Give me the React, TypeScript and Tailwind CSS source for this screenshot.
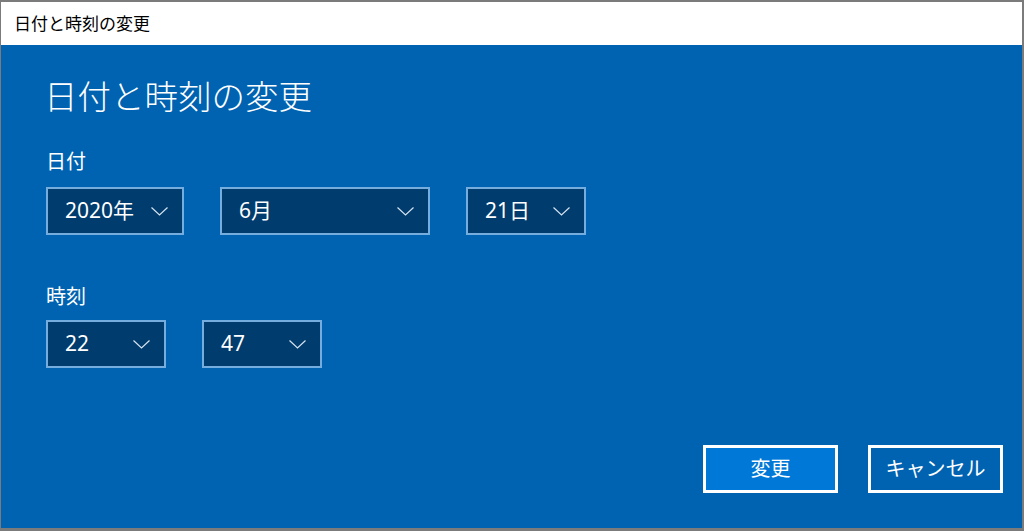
import React from "react";

const font = { fontFamily: '"Noto Sans", "Noto Sans CJK JP", sans-serif' };

function Chevron() {
  return (
    <svg width="17" height="9" viewBox="0 0 17 9" fill="none" className="shrink-0">
      <path d="M0.5 0.5 L8.5 8 L16.5 0.5" stroke="#d5e3f0" strokeWidth="1.2" />
    </svg>
  );
}

function Select({ value, width }: { value: string; width: string }) {
  return (
    <div
      className={`${width} flex h-[48px] items-center justify-between border-2 border-[#76addf] bg-[#003c6d] pl-[17px] pr-[14px] text-[21px] text-white`}
    >
      <span>{value}</span>
      <Chevron />
    </div>
  );
}

export default function App() {
  return (
    <div
      style={font}
      className="flex h-[531px] w-[1024px] flex-col bg-[#7b7b7b] pb-[3px] pl-[1px] pr-[2px] pt-[2px]"
    >
      <div className="flex flex-1 flex-col">
        <div className="flex h-[43px] items-center bg-white pl-[13px] text-[17px] text-black">
          日付と時刻の変更
        </div>

        <div className="flex flex-1 flex-col bg-[#0063b1] pl-[45px] text-white">
          <h1 className="-ml-[2px] mt-[30px] text-[33.5px] font-light leading-[42px]">日付と時刻の変更</h1>

          <p className="mt-[31px] text-[20px] leading-[28px]">日付</p>
          <div className="mt-[11px] flex">
            <Select value="2020年" width="w-[138px]" />
            <div className="ml-[36px]">
              <Select value="6月" width="w-[210px]" />
            </div>
            <div className="ml-[36px]">
              <Select value="21日" width="w-[120px]" />
            </div>
          </div>

          <p className="mt-[48px] text-[20px] leading-[28px]">時刻</p>
          <div className="mt-[9px] flex gap-[36px]">
            <Select value="22" width="w-[120px]" />
            <Select value="47" width="w-[120px]" />
          </div>

          <div className="mt-[77px] flex justify-end gap-[30px] pr-[19px]">
            <button className="flex h-[48px] w-[135px] items-center justify-center border-[3px] border-white bg-[#0078d7] text-[20px] text-white">
              変更
            </button>
            <button className="flex h-[48px] w-[135px] items-center justify-center border-[3px] border-white bg-[#0063b1] text-[20px] text-white">
              キャンセル
            </button>
          </div>
        </div>
      </div>
    </div>
  );
}
